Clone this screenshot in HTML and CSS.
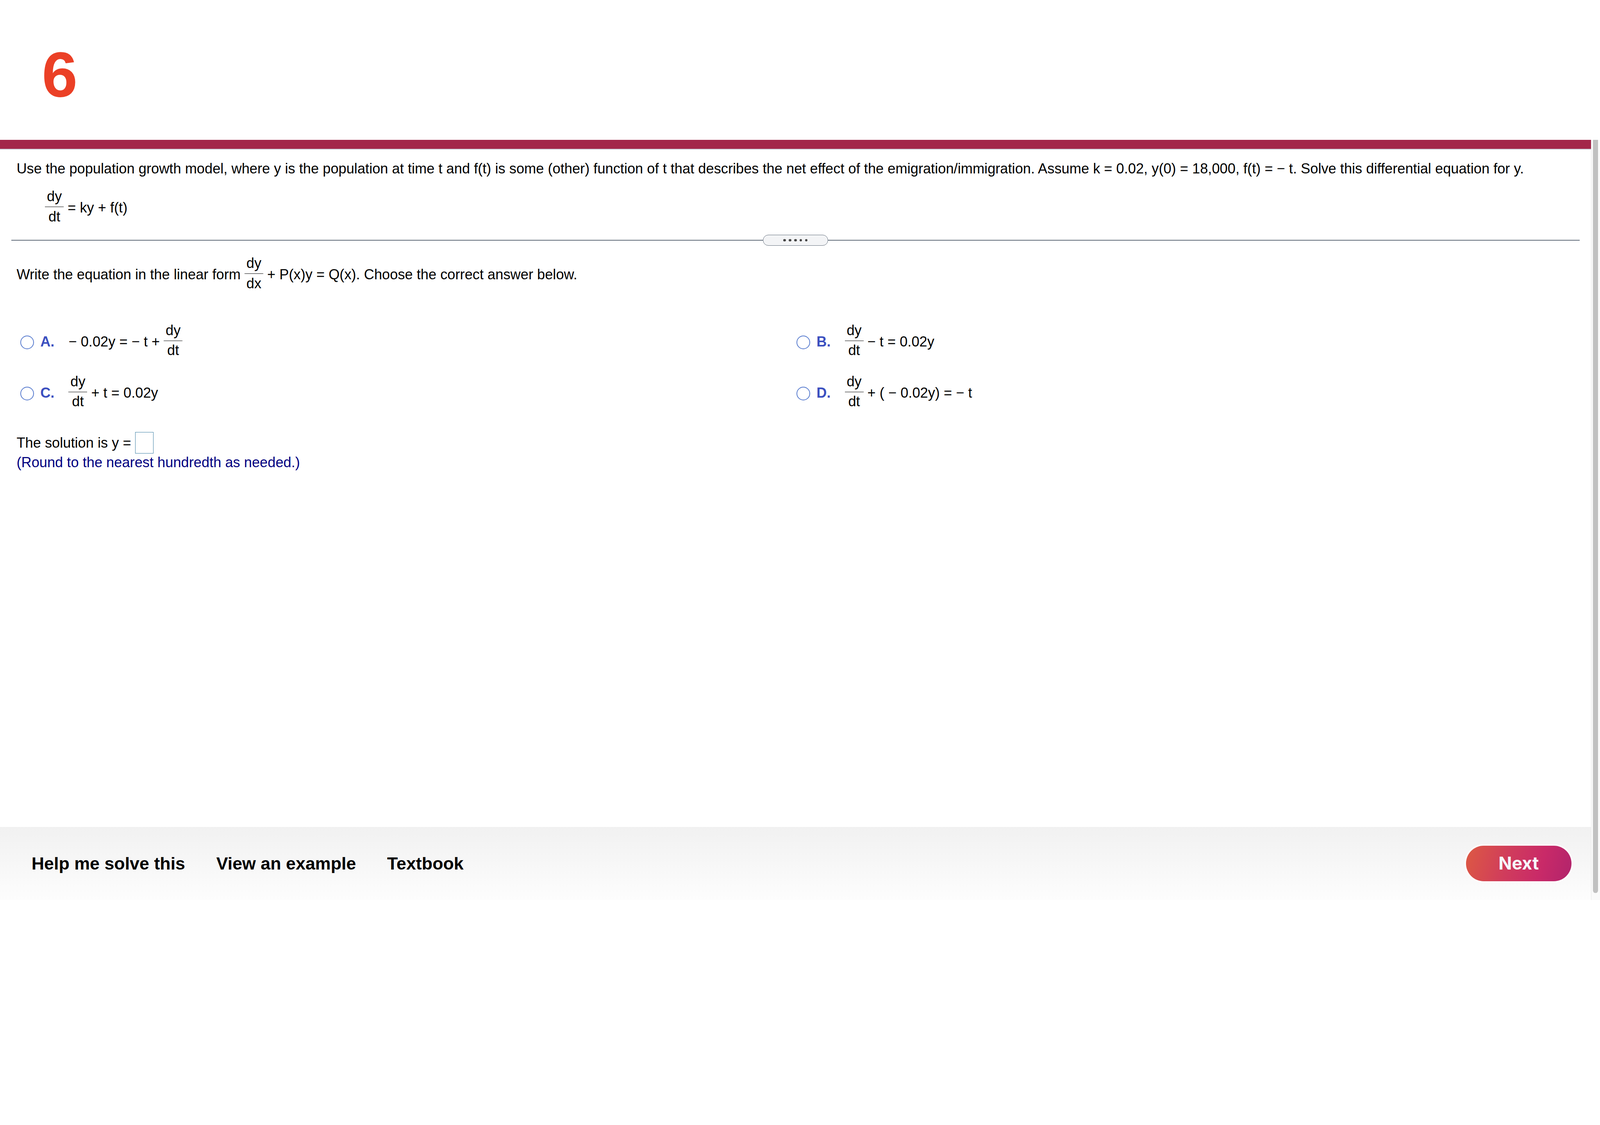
FILE: index.html
```html
<!DOCTYPE html>
<html lang="en">
<head>
<meta charset="utf-8">
<title>Question 6</title>
<link rel="stylesheet" href="styles.css">
</head>
<body>
<div class="page">
  <header class="top"><span class="qnum">6</span></header>
  <div class="body-row">
    <div class="main">
      <div class="topbar"></div>
      <div class="content">
        <p class="problem">Use the population growth model, where y is the population at time t and f(t) is some (other) function of t that describes the net effect of the emigration/immigration. Assume k = 0.02, y(0) = 18,000, f(t) = − t. Solve this differential equation for y.</p>
        <div class="eq"><span class="frac"><span class="num">dy</span><span class="den">dt</span></span> = ky + f(t)</div>
        <div class="divider"><span class="rule"></span><span class="handle"><i></i><i></i><i></i><i></i><i></i></span><span class="rule"></span></div>
        <p class="ask">Write the equation in the linear form <span class="frac"><span class="num">dy</span><span class="den">dx</span></span> + P(x)y = Q(x). Choose the correct answer below.</p>
        <div class="options">
          <div class="opt"><span class="radio"></span><span class="letter">A.</span><span class="expr">− 0.02y = − t + <span class="frac"><span class="num">dy</span><span class="den">dt</span></span></span></div>
          <div class="opt"><span class="radio"></span><span class="letter">B.</span><span class="expr"><span class="frac"><span class="num">dy</span><span class="den">dt</span></span> − t = 0.02y</span></div>
          <div class="opt"><span class="radio"></span><span class="letter">C.</span><span class="expr"><span class="frac"><span class="num">dy</span><span class="den">dt</span></span> + t = 0.02y</span></div>
          <div class="opt"><span class="radio"></span><span class="letter">D.</span><span class="expr"><span class="frac"><span class="num">dy</span><span class="den">dt</span></span> + ( − 0.02y) = − t</span></div>
        </div>
        <p class="sol">The solution is y = <span class="answer"></span></p>
        <p class="hint">(Round to the nearest hundredth as needed.)</p>
      </div>
      <footer class="bottombar">
        <div class="links">
          <span class="link">Help me solve this</span>
          <span class="link">View an example</span>
          <span class="link">Textbook</span>
        </div>
        <span class="next">Next</span>
      </footer>
    </div>
    <div class="scrollbar"><div class="thumb"></div></div>
  </div>
</div>
</body>
</html>
```

FILE: styles.css
```css
html, body {
  margin: 0;
  padding: 0;
}
body {
  overflow: hidden;
  background: #ffffff;
  font-family: "Liberation Sans", Arial, sans-serif;
  color: #000000;
}
.page {
  display: flex;
  flex-direction: column;
  height: 2304px;
}
.top {
  flex: none;
  height: 358.4px;
  box-sizing: border-box;
  padding: 108.8px 0 0 107.2px;
}
.qnum {
  display: block;
  font-weight: 700;
  font-size: 164px;
  line-height: 164px;
  color: #eb4026;
}
.body-row {
  flex: 1;
  display: flex;
  min-height: 0;
}
.main {
  flex: 1;
  min-width: 0;
  display: flex;
  flex-direction: column;
}
.topbar {
  flex: none;
  height: 22.4px;
  background: #a3264a;
  border-bottom: 2.4px solid #cacdd8;
}
.content {
  flex: 1;
  padding: 29.6px 28.8px 0 42.4px;
  font-size: 36.25px;
  line-height: 40.96px;
}
.problem {
  margin: 0;
  white-space: nowrap;
}
.eq {
  margin: 32px 0 0 72.8px;
}
.frac {
  display: inline-flex;
  flex-direction: column;
  vertical-align: 28.8px;
  text-align: center;
}
.num {
  line-height: 36px;
  padding: 0 4.8px 8px;
  border-bottom: 1.6px solid #000000;
}
.den {
  line-height: 36px;
  padding: 6.4px 4.8px 0;
}
.divider {
  display: flex;
  align-items: center;
  height: 28px;
  margin: 28.2px 0 0 -13.6px;
}
.rule {
  flex: 1;
  height: 1.6px;
  background: #5f6b79;
}
.handle {
  flex: none;
  width: 167.2px;
  height: 28px;
  box-sizing: border-box;
  border: 1.6px solid #5f6b79;
  border-radius: 14px;
  background: #f3f4f6;
  display: flex;
  align-items: center;
  justify-content: center;
  gap: 7.6px;
}
.handle i {
  display: block;
  width: 6.4px;
  height: 6.4px;
  border-radius: 50%;
  background: #454545;
}
.ask {
  margin: 27.3px 0 0;
}
.options {
  display: grid;
  grid-template-columns: 1987.2px 1fr;
  row-gap: 43.5px;
  margin-top: 84.3px;
}
.opt {
  white-space: nowrap;
}
.radio {
  display: inline-block;
  width: 35.2px;
  height: 35.2px;
  box-sizing: border-box;
  border: 2.8px solid #5a7dcf;
  border-radius: 50%;
  vertical-align: -7.2px;
  margin: 0 16px 0 9.6px;
}
.letter {
  font-weight: 700;
  color: #3b4fbf;
  margin-right: 36px;
}
.sol {
  margin: 59.4px 0 0;
}
.answer {
  display: inline-block;
  width: 47.2px;
  height: 55.2px;
  box-sizing: border-box;
  border: 1.6px solid #3a7ea3;
  background: #ffffff;
  vertical-align: -15.2px;
}
.hint {
  margin: 3.1px 0 0;
  color: #000080;
}
.bottombar {
  flex: none;
  height: 187.2px;
  display: flex;
  align-items: center;
  padding: 0 49.6px 0 80.7px;
  background: linear-gradient(#f1f1f1, #fdfdfd);
}
.links {
  display: flex;
  gap: 79.6px;
}
.link {
  font-weight: 700;
  font-size: 44.8px;
  color: #000000;
}
.next {
  margin-left: auto;
  width: 270.4px;
  height: 90.4px;
  border-radius: 45.2px;
  display: flex;
  align-items: center;
  justify-content: center;
  background: linear-gradient(105deg, #dd5943 0%, #d03c5c 40%, #c92a68 70%, #b1246c 100%);
  box-shadow: 0 0 0 4px rgba(255, 255, 255, 0.75);
  color: #f7f8fc;
  font-family: Inter, "Liberation Sans", sans-serif;
  font-weight: 700;
  font-size: 44.8px;
}
.scrollbar {
  flex: none;
  width: 22.4px;
  border-left: 1.6px solid #e9e9e9;
  background: #fafafa;
}
.thumb {
  margin-left: 4.8px;
  width: 12.8px;
  height: calc(100% - 18.4px);
  background: #c1c1c1;
  border-radius: 0 0 6.4px 6.4px;
}
```
